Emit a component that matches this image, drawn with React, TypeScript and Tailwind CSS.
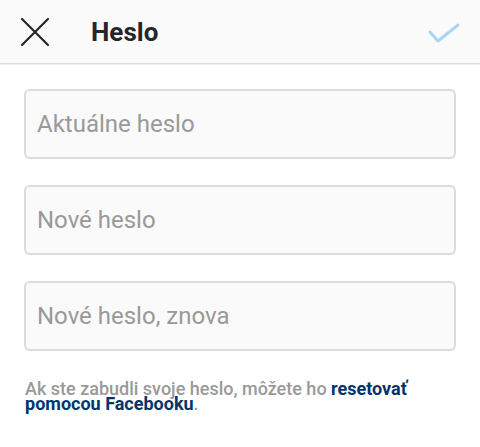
import React from 'react';

const fields = ['Aktuálne heslo', 'Nové heslo', 'Nové heslo, znova'];

function App() {
  return (
    <div className="w-[480px] h-[447px] bg-white font-['Roboto',sans-serif]">
      {/* Header */}
      <div className="h-[64px] bg-[#fafafa] border-b border-[#dbdbdb] shadow-[0_1px_1px_rgba(0,0,0,0.06)] flex items-center pl-[20px] pr-[20px]">
        <svg width="30" height="30" viewBox="0 0 30 30" className="shrink-0">
          <path d="M2 2 L28 28 M28 2 L2 28" stroke="#262626" strokeWidth="2.2" strokeLinecap="round" />
        </svg>
        <h1 className="ml-[41px] text-[26px] font-bold text-[#262626] leading-none">Heslo</h1>
        <div className="flex-1" />
        <svg width="32" height="24" viewBox="0 0 32 24" className="shrink-0 mt-[4px]">
          <path d="M2 10 L10 19 L30 3" fill="none" stroke="#a8d6f4" strokeWidth="3" strokeLinecap="round" strokeLinejoin="round" />
        </svg>
      </div>

      {/* Fields */}
      <div className="px-[24px] pt-[25px] flex flex-col gap-[26px]">
        {fields.map((f) => (
          <div
            key={f}
            className="h-[70px] rounded-[6px] border-2 border-[#dbdbdb] bg-[#fafafa] flex items-center px-[11px]"
          >
            <span className="text-[24px] text-[#999999] leading-none">{f}</span>
          </div>
        ))}
      </div>

      {/* Footer */}
      <p className="px-[25px] mt-[30px] text-[18px] leading-[15px] font-medium text-[#999999]">
        Ak ste zabudli svoje heslo, môžete ho{' '}
        <span className="font-bold text-[#003569]">resetovať pomocou Facebooku</span>.
      </p>
    </div>
  );
}

export default App;
